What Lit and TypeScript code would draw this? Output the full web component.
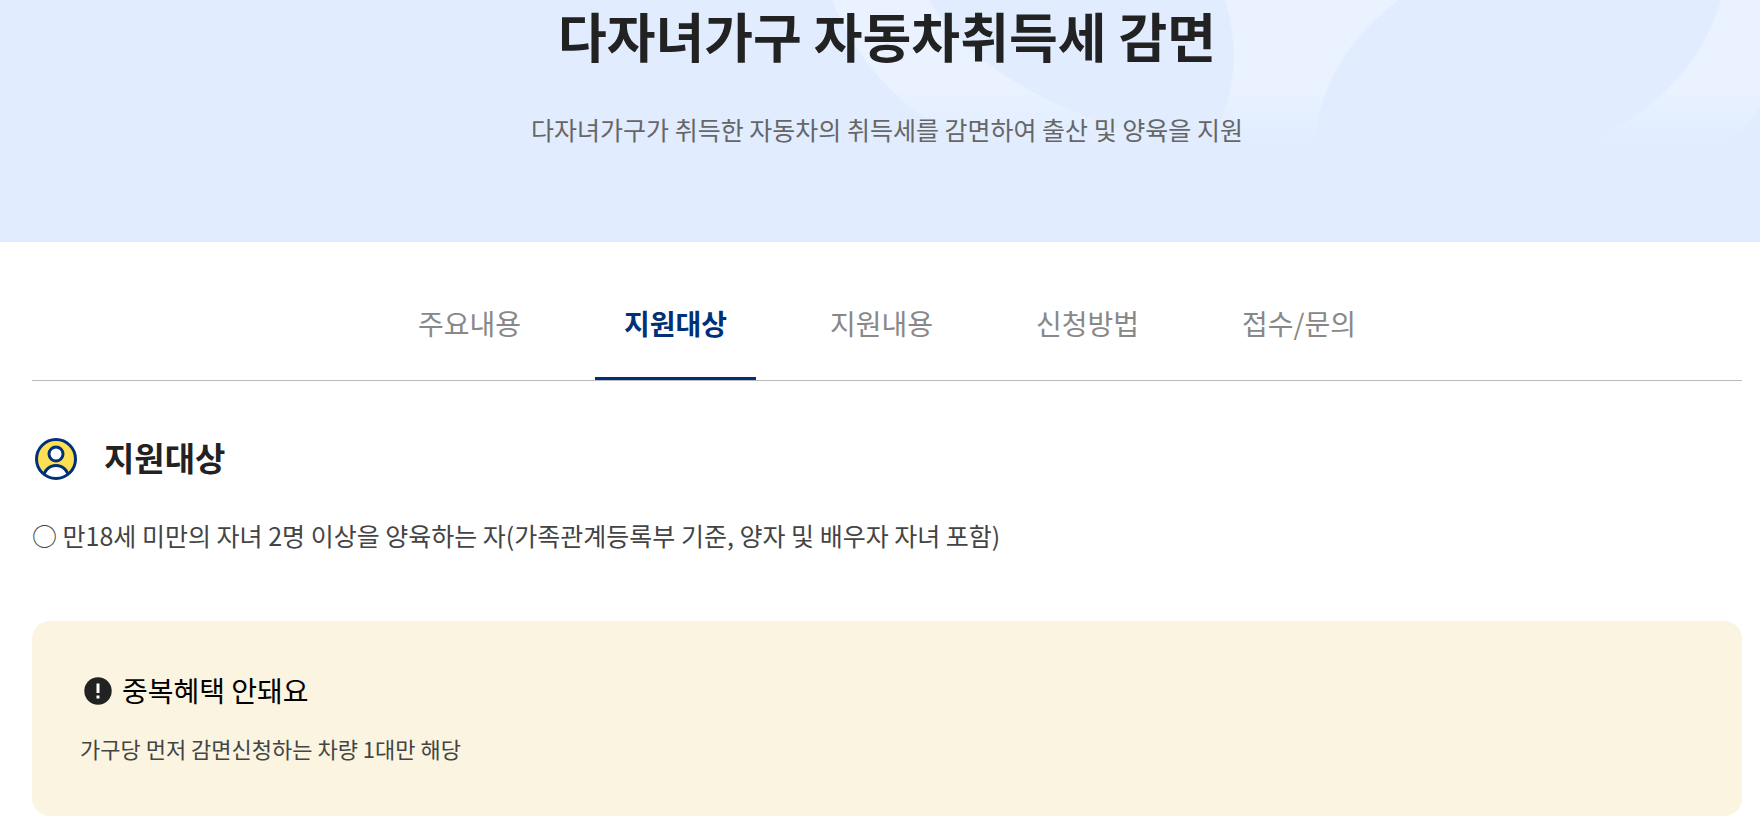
import { LitElement, html, css } from "lit";
import { customElement, state } from "lit/decorators.js";

const TABS = ["주요내용", "지원대상", "지원내용", "신청방법", "접수/문의"];

@customElement("app-root")
export class AppRoot extends LitElement {
  static styles = css`
    :host {
      display: block;
      background: #fff;
      color: #222;
      font-family: "Noto Sans CJK KR", "Noto Sans", sans-serif;
    }
    * {
      box-sizing: border-box;
    }
    h1, h2, h3, p {
      margin: 0;
    }
    .hero {
      position: relative;
      background: #e1ecff;
      padding: 0 18px 96px 32px;
      text-align: center;
    }
    .art {
      position: absolute;
      top: 0;
      right: 0;
      width: 940px;
      height: 148px;
    }
    .title {
      position: relative;
      font-size: 53px;
      line-height: 70px;
      font-weight: 700;
    }
    .lead {
      position: relative;
      padding-top: 42px;
      font-size: 25px;
      line-height: 34px;
      color: #666;
    }
    .body {
      padding: 46px 18px 16px 32px;
    }
    .tabs {
      display: flex;
      justify-content: center;
      gap: 45px;
      border-bottom: 1px solid #bbb;
    }
    .tab {
      padding: 15px 29px 33px;
      border: 0;
      border-bottom: 3px solid transparent;
      background: none;
      font: inherit;
      font-size: 28px;
      line-height: 41px;
      color: #888;
      cursor: pointer;
    }
    .tab.active {
      color: #003078;
      font-weight: 700;
      border-bottom-color: #003078;
    }
    .heading {
      display: flex;
      align-items: center;
      gap: 24px;
      margin-top: 54px;
    }
    .heading svg {
      width: 48px;
      height: 48px;
    }
    .heading h2 {
      padding-bottom: 4px;
      font-size: 33px;
      line-height: 44px;
      font-weight: 700;
    }
    .item {
      margin-top: 34px;
      font-size: 25px;
      line-height: 36px;
      color: #444;
    }
    .notice {
      margin-top: 68px;
      padding: 48px;
      border-radius: 18px;
      background: #faf4e0;
    }
    .notice-title {
      display: flex;
      align-items: center;
      gap: 6px;
      color: #000;
    }
    .notice-title svg {
      width: 36px;
      height: 36px;
    }
    .notice h3 {
      padding-bottom: 2px;
      font-size: 28px;
      line-height: 42px;
      font-weight: 400;
    }
    .notice p {
      margin-top: 18px;
      padding-bottom: 3px;
      font-size: 22px;
      line-height: 34px;
      color: #444;
    }
  `;

  @state() private current = 1;

  render() {
    return html`
      <header class="hero">
        <svg class="art" viewBox="820 0 940 148" aria-hidden="true">
          <defs>
            <linearGradient id="fade" gradientUnits="userSpaceOnUse" x1="0" y1="94" x2="0" y2="146">
              <stop offset="0" stop-color="#eaf1ff"></stop>
              <stop offset="0.1" stop-color="#e7f1ff"></stop>
              <stop offset="1" stop-color="#e1ecff"></stop>
            </linearGradient>
          </defs>
          <path
            fill="url(#fade)"
            d="M832 0C850 46 880 86 925 118C941 130 956 139 972 148H1205Q1217 134 1222 118Q1244 62 1225 0H1399C1350 36 1316 88 1315 148H1572C1650 120 1702 66 1721 0H1760V108Q1744 130 1718 148H1205C1080 128 974 74 929 0Z"
          ></path>
        </svg>
        <h1 class="title">다자녀가구 자동차취득세 감면</h1>
        <p class="lead">다자녀가구가 취득한 자동차의 취득세를 감면하여 출산 및 양육을 지원</p>
      </header>
      <main class="body">
        <div class="tabs" role="tablist">
          ${TABS.map(
            (label, i) => html`<button
              class="tab ${i === this.current ? "active" : ""}"
              role="tab"
              aria-selected=${i === this.current ? "true" : "false"}
              @click=${() => (this.current = i)}
            >${label}</button>`
          )}
        </div>
        <div class="heading">
          <svg viewBox="0 0 48 48" aria-hidden="true">
            <defs>
              <clipPath id="disc"><circle cx="24" cy="24" r="19.5"></circle></clipPath>
            </defs>
            <circle cx="24" cy="24" r="19.5" fill="#ffe053"></circle>
            <g clip-path="url(#disc)" fill="#fff" stroke="#003078" stroke-width="3">
              <circle cx="24" cy="43" r="12.5"></circle>
              <circle cx="24" cy="19" r="7"></circle>
            </g>
            <circle cx="24" cy="24" r="19.5" fill="none" stroke="#003078" stroke-width="3"></circle>
          </svg>
          <h2>지원대상</h2>
        </div>
        <p class="item">○ 만18세 미만의 자녀 2명 이상을 양육하는 자(가족관계등록부 기준, 양자 및 배우자 자녀 포함)</p>
        <section class="notice">
          <div class="notice-title">
            <svg viewBox="0 0 36 36" aria-hidden="true">
              <circle cx="18" cy="18" r="13.7" fill="#222"></circle>
              <rect x="16.5" y="10.5" width="3" height="9.5" fill="#fff"></rect>
              <rect x="16.5" y="22.5" width="3" height="3" fill="#fff"></rect>
            </svg>
            <h3>중복혜택 안돼요</h3>
          </div>
          <p>가구당 먼저 감면신청하는 차량 1대만 해당</p>
        </section>
      </main>
    `;
  }
}
